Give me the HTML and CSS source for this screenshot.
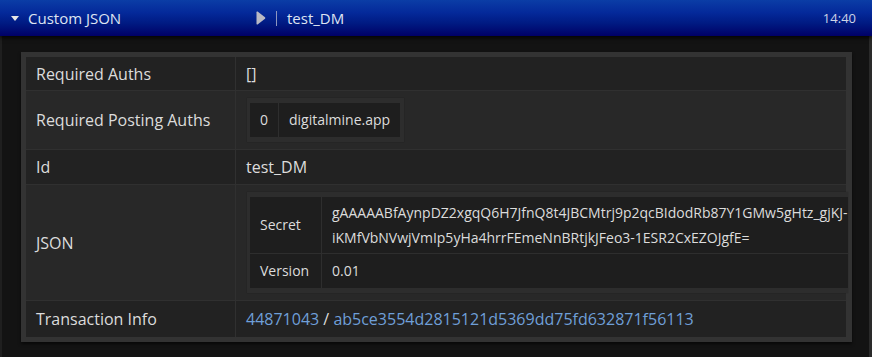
FILE: index.html
```html
<!DOCTYPE html>
<html>
<head>
<meta charset="utf-8">
<link rel="stylesheet" href="styles.css">
</head>
<body>
<div class="page">
  <header class="bar">
    <div class="bar-left">
      <svg class="caret" width="8" height="5" viewBox="0 0 8 5"><path d="M0 0H8L4 5Z" fill="#e6e6e6"/></svg>
      <span class="title">Custom JSON</span>
    </div>
    <div class="bar-mid">
      <svg class="play" width="11" height="14" viewBox="0 0 11 14"><path d="M1.5 1.2Q1.5 0 2.6 0.6L10 6.2Q10.8 7 10 7.8L2.6 13.4Q1.5 14 1.5 12.8Z" fill="#b9b9c4"/></svg>
      <span class="sep"></span>
      <span class="tid">test_DM</span>
    </div>
    <span class="time">14:40</span>
  </header>
  <main class="content">
    <div class="panel">
      <table class="grid">
        <tr class="r1 ra"><td class="k">Required Auths</td><td class="v">[]</td></tr>
        <tr class="r2"><td class="k">Required Posting Auths</td><td class="v">
          <div class="nest"><table class="sub"><tr><td class="idx">0</td><td class="sv">digitalmine.app</td></tr></table></div>
        </td></tr>
        <tr class="r1 rid"><td class="k">Id</td><td class="v">test_DM</td></tr>
        <tr class="r2"><td class="k">JSON</td><td class="v">
          <div class="nest wide"><table class="sub"><tr><td class="sk">Secret</td><td class="sv long">gAAAAABfAynpDZ2xgqQ6H7JfnQ8t4JBCMtrj9p2qcBIdodRb87Y1GMw5gHtz_gjKJ-<br>iKMfVbNVwjVmIp5yHa4hrrFEmeNnBRtjkJFeo3-1ESR2CxEZOJgfE=</td></tr>
          <tr><td class="sk">Version</td><td class="sv">0.01</td></tr></table></div>
        </td></tr>
        <tr class="r1 rtx"><td class="k">Transaction Info</td><td class="v"><a class="lnk">44871043</a> / <a class="lnk">ab5ce3554d2815121d5369dd75fd632871f56113</a></td></tr>
      </table>
    </div>
  </main>
</div>
</body>
</html>
```
FILE: styles.css
```css
html, body { margin: 0; padding: 0; }
body {
  width: 872px; height: 357px; overflow: hidden;
  background: #131313;
  font-family: "Open Sans", "DejaVu Sans", sans-serif;
  color: #dcdcdc;
}
.page { height: 357px; display: flex; flex-direction: column; }
.bar {
  height: 36px; flex: none;
  display: flex; align-items: center;
  background: linear-gradient(#0b3da6 0%, #04299a 35%, #001a82 65%, #000066 100%);
  box-shadow: 0 2px 4px rgba(0,0,0,0.8);
  color: #dfe4f2; font-size: 15px;
  position: relative; z-index: 1;
}
.bar-left { display: flex; align-items: center; width: 255px; padding-left: 11px; box-sizing: border-box; }
.caret { margin-right: 9px; margin-top: 1px; }
.bar-mid { display: flex; align-items: center; flex: 1; }
.sep { width: 1px; height: 15px; background: #8d96c0; margin: 0 10px 0 10px; }
.tid { font-size: 15px; }
.time { font-size: 13px; margin-right: 16px; color: #cdd3e6; }
.content {
  flex: 1;
  border-left: 2px solid #1f1f1f;
  border-right: 3px solid #2a2a2a;
  box-sizing: border-box;
  padding: 16px 17px 0 19px;
}
.panel {
  background: #333;
  padding: 5px 6px 5px 5px;
  width: 820px;
  box-shadow: 0 2px 3px rgba(0,0,0,0.6);
}
.grid { width: 100%; border-collapse: collapse; font-size: 16px; table-layout: fixed; }
.grid td { border: 1px solid #303030; vertical-align: middle; }
.grid tr:first-child td { border-top: none; }
.grid tr:last-child td { border-bottom: none; }
.grid td:first-child { border-left: none; }
.grid td:last-child { border-right: none; }
.r1 td { background: #222222; }
.r2 td { background: #282828; }
.k { width: 189px; padding: 6px 10px 6px 10px; line-height: 22px; }
.v { padding: 6px 10px 6px 10px; line-height: 22px; }
.ra td { padding-top: 6px; padding-bottom: 5px; }
.rtx td { padding-top: 7px; padding-bottom: 7px; }
.nest {
  display: inline-block;
  vertical-align: middle;
  background: #2d2d2d;
  padding: 5px 4px 5px 3px;
  margin: 1px 0 1px 1px;
  box-shadow: 0 0 1px rgba(0,0,0,0.3);
}
.nest.wide { margin-right: -14px; padding-right: 0; }
.sub { border-collapse: collapse; font-size: 14px; }
.sub td { background: #1e1e1e; border: 1px solid #2e2e2e; line-height: 20px; }
.idx { padding: 7px 10px; text-align: center; width: 8px; }
.sv { padding: 7px 10px; }
.sk { padding: 7px 10px; width: 51px; }
.sub td.long { line-height: 25px; padding: 3px 0 3px 10px; white-space: nowrap; }
.lnk { color: #6f9fd8; text-decoration: none; }
```
